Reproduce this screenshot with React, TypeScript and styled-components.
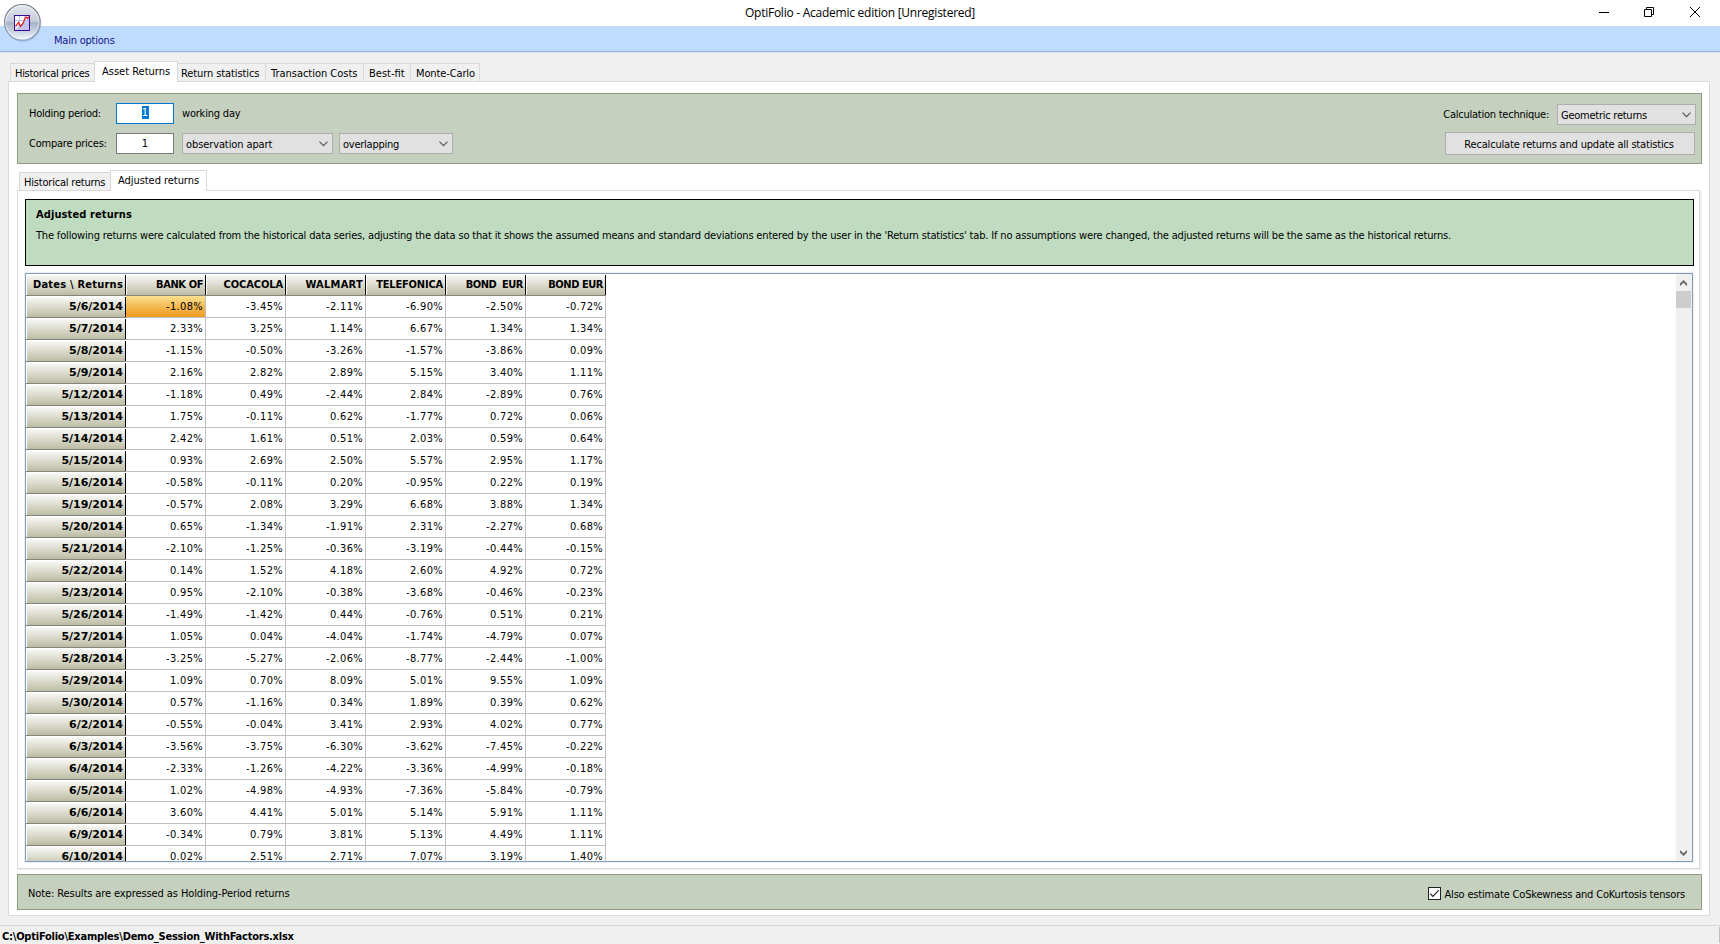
import React from 'react';
import styled, { createGlobalStyle, css } from 'styled-components';

const GlobalStyle = createGlobalStyle`
  html, body { margin: 0; padding: 0; overflow: hidden; }
  * { box-sizing: border-box; }
`;

const ui = "'DejaVu Sans Condensed', 'DejaVu Sans', sans-serif";

const Window = styled.div`
  position: relative;
  display: flex;
  flex-direction: column;
  width: 1720px;
  height: 944px;
  overflow: hidden;
  background: #f0f0f0;
  color: #000;
  font: 11px/13px ${ui};
  white-space: pre;
`;

const Label = styled.span<{ $track?: number; $bold?: boolean }>`
  letter-spacing: ${p => p.$track ?? 0}px;
  font-weight: ${p => (p.$bold ? 700 : 400)};
`;

/* Title bar */
const TitleBar = styled.header`
  flex: none;
  display: grid;
  grid-template-columns: 1fr auto 1fr;
  height: 26px;
  background: #fff;
`;
const Title = styled.h1`
  grid-column: 2;
  margin: 0;
  padding-top: 4px;
  font: 400 12px/17px 'Open Sans', 'Noto Sans', sans-serif;
  letter-spacing: -0.25px;
`;
const WindowButtons = styled.div`
  display: flex;
  justify-content: flex-end;
  gap: 35px;
  padding: 7px 20px 0 0;
`;
const WindowGlyph = styled.svg`
  width: 10px;
  height: 10px;
  overflow: visible;
  fill: none;
  stroke: #000;
  &:last-child { margin-left: 1px; }
`;

/* Menu strip */
const MenuStrip = styled.nav`
  flex: none;
  height: 27px;
  padding: 8px 0 0 54px;
  background: #bfdbff;
  border-bottom: 1px solid #d5e2f5;
  box-shadow: inset 0 -1px 0 #9ab5e4;
  color: #15158a;
`;
const Orb = styled.svg`
  position: absolute;
  left: 3px;
  top: 3px;
  width: 40px;
  height: 40px;
`;

/* Tabs */
const TabStrip = styled.div<{ $indent: number }>`
  flex: none;
  display: flex;
  align-items: flex-end;
  height: 20px;
  padding-left: ${p => p.$indent}px;
`;
const Tab = styled.div<{ $width: number; $pad: number; $active?: boolean; $joined?: boolean }>`
  width: ${p => p.$width}px;
  height: 18px;
  padding: 3px 0 0 ${p => p.$pad}px;
  border: 1px solid #d9d9d9;
  border-width: 1px 0 0 ${p => (p.$joined ? 0 : 1)}px;
  background: #f0f0f0;
  &:last-child { border-right-width: 1px; }
  ${p => p.$active && css`
    position: relative;
    height: 21px;
    margin-bottom: -1px;
    border-right-width: 1px;
    background: #fff;
  `}
`;

const OuterTabs = styled.div`
  flex: none;
  display: flex;
  flex-direction: column;
  width: 1702px;
  height: 855px;
  margin: 8px 0 0 8px;
`;
const Page = styled.main`
  flex: 1;
  display: flex;
  flex-direction: column;
  border: 1px solid #d9d9d9;
  background: #fff;
  padding: 11px 7px 5px 8px;
`;

const Panel = styled.section`
  flex: none;
  display: flex;
  justify-content: space-between;
  background: #c5d0be;
  border: 1px solid #8b9c80;
`;
const OptionsPanel = styled(Panel)`
  height: 71px;
  padding: 9px 5px 0 11px;
`;
const FieldColumn = styled.div`
  display: flex;
  flex-direction: column;
  gap: 9px;
`;
const FieldRow = styled.div`
  display: flex;
  height: 21px;
`;
const FieldCaption = styled.div`
  width: 87px;
  padding-top: 4px;
`;
const NumberBox = styled.div<{ $focused?: boolean }>`
  width: 58px;
  height: 21px;
  padding-top: ${p => (p.$focused ? 2 : 3)}px;
  border: 1px solid ${p => (p.$focused ? '#0078d7' : '#7a7a7a')};
  background: #fff;
  text-align: center;
`;
const Selection = styled.span`
  display: inline-block;
  width: 7px;
  height: 13px;
  line-height: 14px;
  background: #0078d7;
  color: #fff;
`;
const Unit = styled.div`
  padding: 4px 0 0 8px;
`;
const Combo = styled.div<{ $width: number; $gap: number }>`
  display: flex;
  justify-content: space-between;
  width: ${p => p.$width}px;
  height: 21px;
  margin-left: ${p => p.$gap}px;
  padding: 4px 4px 0 3px;
  border: 1px solid #adadad;
  background: #e1e1e1;
`;
const ComboArrow = styled.svg`
  width: 9px;
  height: 6px;
  margin-top: 3px;
  fill: none;
  stroke: #555;
  stroke-width: 1.2;
`;
const ActionColumn = styled.div`
  display: flex;
  flex-direction: column;
  align-items: flex-end;
  gap: 7px;
  padding-top: 1px;
`;
const TechniqueCaption = styled.div`
  padding-top: 4px;
`;
const Button = styled.div`
  width: 250px;
  height: 23px;
  margin-right: 1px;
  padding: 5px 2px 0 0;
  border: 1px solid #adadad;
  background: #e1e1e1;
  text-align: center;
`;

const InnerTabs = styled.div`
  flex: none;
  display: flex;
  flex-direction: column;
  width: 1685px;
  height: 700px;
  margin-top: 6px;
`;
const InnerPage = styled.div`
  flex: 1;
  padding: 8px 5px 6px 7px;
  margin: 0 2px 1px 0;
  border: 1px solid #d9d9d9;
  background: #fff;
  box-shadow: 2px 1px 0 #f0f0f0;
`;
const InfoBox = styled.div`
  display: flex;
  flex-direction: column;
  gap: 8px;
  width: 1669px;
  height: 67px;
  padding: 8px 0 0 10px;
  background: #c0dcc0;
  border: 1px solid #000;
`;

/* Data grid */
const GridFrame = styled.div`
  display: flex;
  justify-content: space-between;
  width: 1668px;
  height: 589px;
  margin-top: 7px;
  border: 1px solid #7f9db9;
  box-shadow: 0 0 0 1px #eef0f3;
  overflow: hidden;
`;
const Table = styled.div`
  display: grid;
  grid-template-columns: 100px repeat(6, 80px);
  grid-auto-rows: 22px;
`;
const fixedCell = css`
  height: 22px;
  padding: 4px 3px 0 0;
  border-bottom: 1px solid #84847a;
  background:
    linear-gradient(#000, #000) right 1px / 1px 20px no-repeat,
    linear-gradient(90deg, #fff 1px, transparent 1px),
    linear-gradient(#fff 1px, #f6f6f2 2px, #d9d9cb 55%, #bcbca4 100%);
  font-weight: 700;
  text-align: right;
`;
const HeadCell = styled.div<{ $track: number }>`
  ${fixedCell}
  letter-spacing: ${p => p.$track}px;
`;
const DateCell = styled.div`
  ${fixedCell}
  font-family: 'DejaVu Sans', sans-serif;
`;
const Cell = styled.div<{ $selected?: boolean }>`
  height: 22px;
  padding: 4px 2px 0 0;
  border: 1px solid #c0c0c0;
  border-width: 0 1px 1px 0;
  background: ${p => (p.$selected ? 'linear-gradient(#fbe08e, #f4b74e 55%, #ef9a1e)' : '#fff')};
  letter-spacing: 0.32px;
  text-align: right;
`;
const ScrollBar = styled.div`
  display: flex;
  flex-direction: column;
  width: 16px;
  background: #f0f0f0;
`;
const ScrollThumb = styled.div`
  width: 15px;
  height: 17px;
  margin: 5px 0 auto;
  background: #cdcdcd;
`;
const ScrollArrow = styled.svg<{ $down?: boolean }>`
  width: 7px;
  height: 6px;
  margin: ${p => (p.$down ? '0 0 5px 4px' : '6px 0 0 4px')};
  transform: ${p => (p.$down ? 'scaleY(-1)' : 'none')};
  fill: #606060;
`;

const NotePanel = styled(Panel)`
  height: 36px;
  margin-top: 4px;
  padding: 12px 16px 0 10px;
`;
const CheckRow = styled.div`
  display: flex;
  gap: 3px;
  padding-top: 1px;
`;
const CheckBox = styled.svg`
  width: 13px;
  height: 13px;
  margin-top: -1px;
`;

const StatusBar = styled.footer`
  display: flex;
  justify-content: space-between;
  height: 19px;
  margin-top: 9px;
  padding: 1px 0 0 2px;
  border-top: 1px solid #d7d7d7;
`;
const StatusText = styled(Label)`
  padding-top: 3px;
`;
const StatusDivider = styled.i`
  width: 1px;
  height: 16px;
  background: #bdbdbd;
`;

const headers: [string, number][] = [
  ['Dates \\ Returns', 0.22],
  ['BANK OF', -0.4],
  ['COCACOLA', -0.1],
  ['WALMART', 0.26],
  ['TELEFONICA', -0.18],
  ['BOND  EUR', -0.5],
  ['BOND EUR', -0.45],
];

const rows = `5/6/2014 -1.08 -3.45 -2.11 -6.90 -2.50 -0.72
5/7/2014 2.33 3.25 1.14 6.67 1.34 1.34
5/8/2014 -1.15 -0.50 -3.26 -1.57 -3.86 0.09
5/9/2014 2.16 2.82 2.89 5.15 3.40 1.11
5/12/2014 -1.18 0.49 -2.44 2.84 -2.89 0.76
5/13/2014 1.75 -0.11 0.62 -1.77 0.72 0.06
5/14/2014 2.42 1.61 0.51 2.03 0.59 0.64
5/15/2014 0.93 2.69 2.50 5.57 2.95 1.17
5/16/2014 -0.58 -0.11 0.20 -0.95 0.22 0.19
5/19/2014 -0.57 2.08 3.29 6.68 3.88 1.34
5/20/2014 0.65 -1.34 -1.91 2.31 -2.27 0.68
5/21/2014 -2.10 -1.25 -0.36 -3.19 -0.44 -0.15
5/22/2014 0.14 1.52 4.18 2.60 4.92 0.72
5/23/2014 0.95 -2.10 -0.38 -3.68 -0.46 -0.23
5/26/2014 -1.49 -1.42 0.44 -0.76 0.51 0.21
5/27/2014 1.05 0.04 -4.04 -1.74 -4.79 0.07
5/28/2014 -3.25 -5.27 -2.06 -8.77 -2.44 -1.00
5/29/2014 1.09 0.70 8.09 5.01 9.55 1.09
5/30/2014 0.57 -1.16 0.34 1.89 0.39 0.62
6/2/2014 -0.55 -0.04 3.41 2.93 4.02 0.77
6/3/2014 -3.56 -3.75 -6.30 -3.62 -7.45 -0.22
6/4/2014 -2.33 -1.26 -4.22 -3.36 -4.99 -0.18
6/5/2014 1.02 -4.98 -4.93 -7.36 -5.84 -0.79
6/6/2014 3.60 4.41 5.01 5.14 5.91 1.11
6/9/2014 -0.34 0.79 3.81 5.13 4.49 1.11
6/10/2014 0.02 2.51 2.71 7.07 3.19 1.40`
  .split('\n')
  .map(line => line.split(' '));

const Chevron = () => (
  <ComboArrow viewBox="0 0 9 6">
    <path d="M0.5 0.7 L4.5 4.7 L8.5 0.7" />
  </ComboArrow>
);

const AppOrb = () => (
  <Orb viewBox="0 0 40 40">
    <defs>
      <linearGradient id="face" x1="0" y1="0" x2="0" y2="1">
        <stop offset="0" stopColor="#e4e8ee" />
        <stop offset="0.46" stopColor="#c6cdd9" />
        <stop offset="0.52" stopColor="#a7b4c8" />
        <stop offset="0.8" stopColor="#d0dae8" />
        <stop offset="1" stopColor="#f4f8fd" />
      </linearGradient>
      <linearGradient id="rim" x1="0" y1="0" x2="0" y2="1">
        <stop offset="0" stopColor="#6f7884" />
        <stop offset="1" stopColor="#93a5c0" />
      </linearGradient>
    </defs>
    <circle cx="19.8" cy="20.3" r="18.4" fill="#7c90b0" opacity="0.5" />
    <circle cx="19.3" cy="19.3" r="17.8" fill="url(#face)" stroke="url(#rim)" strokeWidth="1.2" />
    <circle cx="19.3" cy="19.3" r="16.6" fill="none" stroke="#fff" strokeOpacity="0.6" />
    <rect x="11.5" y="12.5" width="15" height="15" fill="#fff" />
    <path d="M12 27 L27 13 V27 Z" fill="#c4c4f6" />
    <path d="M16.5 13v14M21.5 13v14M12 17.5h15M12 22.5h15" stroke="#b9c4ee" strokeWidth="1" />
    <path d="M12.5 23.5 L15.5 19.5 L17.5 23.5 L20 20.5 L21.5 16.5 L23 14 L24.5 15.5 L26 13.5" fill="none" stroke="#f01414" strokeWidth="1.2" />
    <rect x="11.5" y="12.5" width="15" height="15" fill="none" stroke="#3c0a96" />
  </Orb>
);

const arrowPath = 'M3.5 0 L7 3.5 V6 L3.5 2.6 L0 6 V3.5 Z';

export default function App() {
  return (
    <Window>
      <GlobalStyle />
      <TitleBar>
        <Title>OptiFolio - Academic edition [Unregistered]</Title>
        <WindowButtons>
          <WindowGlyph viewBox="0 0 10 10"><path d="M0 5.5h10" /></WindowGlyph>
          <WindowGlyph viewBox="0 0 10 10"><path d="M0.5 2.5h7v7h-7zM2.5 2.5v-2h7v7h-2" /></WindowGlyph>
          <WindowGlyph viewBox="0 0 10 10"><path d="M0 0L10 10M10 0L0 10" /></WindowGlyph>
        </WindowButtons>
      </TitleBar>
      <MenuStrip><Label $track={-0.22}>Main options</Label></MenuStrip>
      <AppOrb />

      <OuterTabs>
        <TabStrip $indent={2}>
          <Tab $width={84} $pad={4}><Label $track={-0.29}>Historical prices</Label></Tab>
          <Tab $width={84} $pad={7} $active><Label>Asset Returns</Label></Tab>
          <Tab $width={87} $pad={3} $joined><Label $track={-0.1}>Return statistics</Label></Tab>
          <Tab $width={98} $pad={5}><Label $track={-0.02}>Transaction Costs</Label></Tab>
          <Tab $width={47} $pad={5}><Label>Best-fit</Label></Tab>
          <Tab $width={70} $pad={5}><Label $track={-0.12}>Monte-Carlo</Label></Tab>
        </TabStrip>
        <Page>
          <OptionsPanel>
            <FieldColumn>
              <FieldRow>
                <FieldCaption><Label $track={-0.26}>Holding period:</Label></FieldCaption>
                <NumberBox $focused><Selection>1</Selection></NumberBox>
                <Unit><Label $track={-0.2}>working day</Label></Unit>
              </FieldRow>
              <FieldRow>
                <FieldCaption><Label $track={-0.23}>Compare prices:</Label></FieldCaption>
                <NumberBox>1</NumberBox>
                <Combo $width={151} $gap={8}><Label $track={-0.1}>observation apart</Label><Chevron /></Combo>
                <Combo $width={114} $gap={6}><Label $track={-0.25}>overlapping</Label><Chevron /></Combo>
              </FieldRow>
            </FieldColumn>
            <ActionColumn>
              <FieldRow>
                <TechniqueCaption><Label $track={-0.24}>Calculation technique:</Label></TechniqueCaption>
                <Combo $width={139} $gap={8}><Label $track={-0.25}>Geometric returns</Label><Chevron /></Combo>
              </FieldRow>
              <Button><Label $track={-0.18}>Recalculate returns and update all statistics</Label></Button>
            </ActionColumn>
          </OptionsPanel>

          <InnerTabs>
            <TabStrip $indent={2}>
              <Tab $width={91} $pad={4}><Label $track={-0.2}>Historical returns</Label></Tab>
              <Tab $width={97} $pad={7} $active><Label $track={-0.05}>Adjusted returns</Label></Tab>
            </TabStrip>
            <InnerPage>
              <InfoBox>
                <Label $bold $track={0.11}>Adjusted returns</Label>
                <Label $track={-0.169}>The following returns were calculated from the historical data series, adjusting the data so that it shows the assumed means and standard deviations entered by the user in the 'Return statistics' tab. If no assumptions were changed, the adjusted returns will be the same as the historical returns.</Label>
              </InfoBox>
              <GridFrame>
                <Table>
                  {headers.map(([text, track]) => <HeadCell key={text} $track={track}>{text}</HeadCell>)}
                  {rows.map(([date, ...values], r) => (
                    <React.Fragment key={date}>
                      <DateCell>{date}</DateCell>
                      {values.map((v, c) => <Cell key={c} $selected={r === 0 && c === 0}>{v}%</Cell>)}
                    </React.Fragment>
                  ))}
                </Table>
                <ScrollBar>
                  <ScrollArrow viewBox="0 0 7 6"><path d={arrowPath} /></ScrollArrow>
                  <ScrollThumb />
                  <ScrollArrow $down viewBox="0 0 7 6"><path d={arrowPath} /></ScrollArrow>
                </ScrollBar>
              </GridFrame>
            </InnerPage>
          </InnerTabs>

          <NotePanel>
            <Label $track={-0.1}>Note: Results are expressed as Holding-Period returns</Label>
            <CheckRow>
              <CheckBox viewBox="0 0 13 13">
                <rect x="0.5" y="0.5" width="12" height="12" fill="#fff" stroke="#222" />
                <path d="M2.2 6.6 L4.9 9.3 L10.8 3.2" fill="none" stroke="#222" strokeWidth="1.2" />
              </CheckBox>
              <Label $track={-0.18}>Also estimate CoSkewness and CoKurtosis tensors</Label>
            </CheckRow>
          </NotePanel>
        </Page>
      </OuterTabs>

      <StatusBar>
        <StatusText $bold $track={-0.225}>C:\OptiFolio\Examples\Demo_Session_WithFactors.xlsx</StatusText>
        <StatusDivider />
      </StatusBar>
    </Window>
  );
}
